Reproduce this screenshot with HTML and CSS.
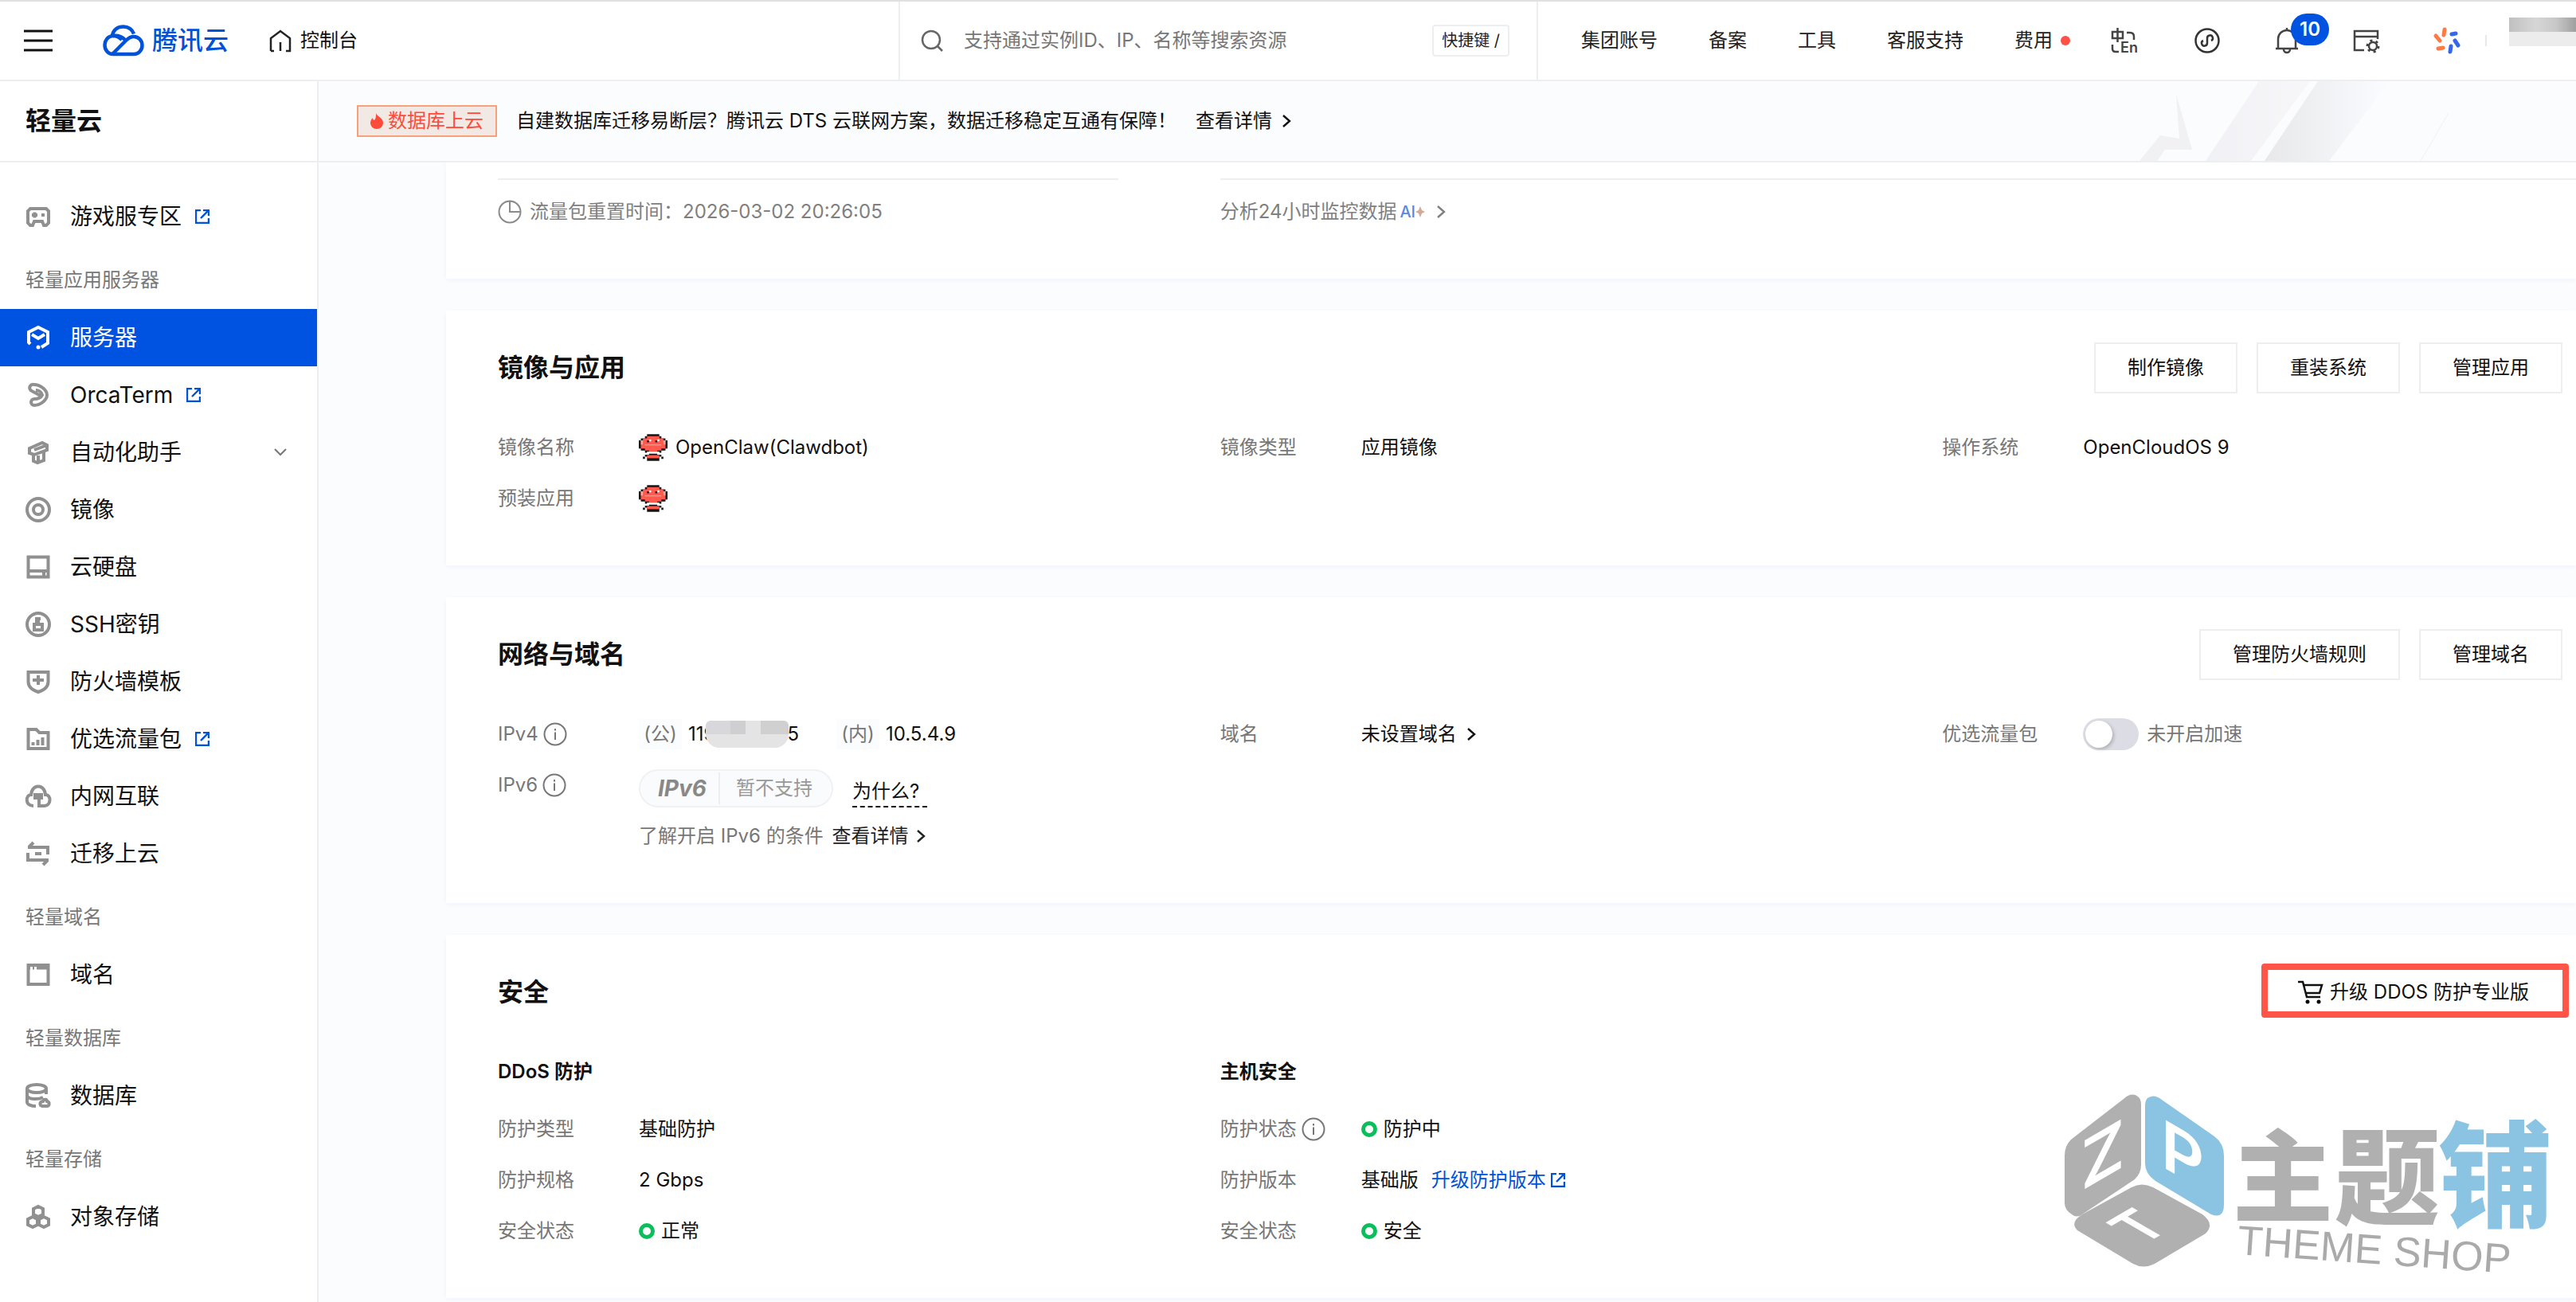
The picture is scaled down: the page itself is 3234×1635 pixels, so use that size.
FILE: index.html
```html
<!DOCTYPE html>
<html lang="zh-CN">
<head>
  <meta charset="UTF-8">
  <title>轻量云 - 控制台</title>
  <link rel="stylesheet" href="styles.css">
</head>
<body>

<!-- Shared icons -->
<svg class="sprite" aria-hidden="true">
  <symbol id="i-ext" viewBox="0 0 18 18"><path d="M7 1H1v16h16v-6M7 11l9-9M10 1h7v7" fill="none" stroke="currentColor" stroke-width="2.4"/></symbol>
  <symbol id="i-arrow" viewBox="0 0 12 18"><path d="M2 2l8 7-8 7" fill="none" stroke="currentColor" stroke-width="2.4"/></symbol>
  <symbol id="i-info" viewBox="0 0 30 30"><circle cx="15" cy="15" r="13.5" fill="none" stroke="currentColor" stroke-width="2"/><path d="M15 12.500v9.500M15 8v2.500" stroke="currentColor" stroke-width="2"/></symbol>
  <symbol id="i-claw" viewBox="0 0 14 13">
    <path d="M4 0h6v1h1v1h2v1h1v4h-1v1h-2v1H9v1h2v1h1v1h-1v-1h-1v2H4v-2H3v1H2v-1h1v-1h2V9H3V8H1V7H0V3h1V2h2V1h1z" fill="#151515"/>
    <path d="M4 1h6v1h2v1h1v4h-2v1H9v.5H5V8H3V7H1V3h1V2h2z" fill="#ff5a4d"/>
    <path d="M4 8.500h6v1H4z" fill="#fff"/>
    <path d="M4 10.200h6v1.500H4z" fill="#ff5a4d"/>
    <path d="M4 3h1v1H4zM8 3h1v1H8z" fill="#151515"/><path d="M5 2.500h1v1H5zM9 2.500h1v1H9z" fill="#fff"/>
    <path d="M1 3h1v2H1zM12 3h1v2h-1zM3 5h8v.4H3z" fill="#ffa59c"/>
  </symbol>
</svg>

<header class="topbar">
  <div class="topbar-left">
    <button class="icon-btn menu-btn" aria-label="菜单">
      <svg width="36" height="28" viewBox="0 0 36 28"><path d="M0 2h36M0 14h36M0 26h36" stroke="#111" stroke-width="3"/></svg>
    </button>
    <a href="#" class="logo">
      <svg width="52" height="40" viewBox="0 0 52 40" fill="none" stroke="#0052d9" stroke-width="4.500" stroke-linejoin="round"><path d="M12 14C13 6 19 2.500 26 2.500c6 0 11 3.500 13 9"/><path d="M28 19C21 12 15 14 12 14C6 15 2.500 20 2.500 25.500 2.500 32 7 37 13 37h26c6 0 10.500-5 10.500-11S45 15 39 15c-4 0-7 2-9.500 4.500L13 36"/><path d="M13 14c4 0 8 2 11 5"/></svg>
      <span>腾讯云</span>
    </a>
    <a href="#" class="home">
      <svg width="30" height="28" viewBox="0 0 30 28"><path d="M3 27V11L15 2l12 9v16h-5M3 27h4M15 16v11" fill="none" stroke="#222" stroke-width="2.500"/></svg>
      <span>控制台</span>
    </a>
  </div>
  <div class="search">
    <svg width="28" height="28" viewBox="0 0 28 28"><circle cx="13" cy="13" r="11" fill="none" stroke="#666" stroke-width="2.500"/><path d="M21 21l6 6" stroke="#666" stroke-width="2.500"/></svg>
    <input type="text" aria-label="搜索" placeholder="支持通过实例ID、IP、名称等搜索资源">
    <kbd>快捷键 /</kbd>
  </div>
  <nav class="topnav">
    <a href="#">集团账号</a>
    <a href="#">备案</a>
    <a href="#">工具</a>
    <a href="#">客服支持</a>
    <a href="#" class="fee">费用<i class="dot"></i></a>
  </nav>
  <div class="tools">
    <button class="icon-btn lang" aria-label="语言">
      <svg width="34" height="34" viewBox="0 0 34 34"><g fill="none" stroke="#444" stroke-width="2.500"><path d="M2 6h13v8H2zM8.500 1v18M20 7h4q5 0 5 5v4M2 22v5q0 4 4 4h4"/></g><text x="12" y="32" class="lang-en">En</text></svg>
    </button>
    <button class="icon-btn" aria-label="小程序">
      <svg width="34" height="34" viewBox="0 0 34 34" fill="none" stroke="#333" stroke-width="2.500"><circle cx="17" cy="17" r="14.500"/><path d="M12 17a3.500 3.500 0 1 0 5 3v-6a3.500 3.500 0 1 1 5 3"/></svg>
    </button>
    <button class="icon-btn" aria-label="消息">
      <svg width="34" height="34" viewBox="0 0 34 34" fill="none" stroke="#444" stroke-width="2.500"><path d="M3 27h28M6 27V15a11 11 0 0 1 22 0v12M17 1v4M13 28a4 4 0 0 0 8 0"/></svg>
      <span class="badge">10</span>
    </button>
    <button class="icon-btn" aria-label="设置">
      <svg width="34" height="34" viewBox="0 0 34 34" fill="none" stroke="#444" stroke-width="2.500"><path d="M14 29H2V5h29v10M2 12h29"/><circle cx="25" cy="24" r="5"/><circle cx="25" cy="24" r="7" stroke-dasharray="3 4.300" stroke-width="3"/></svg>
    </button>
    <button class="icon-btn" aria-label="助手">
      <svg width="36" height="36" viewBox="0 0 36 36" stroke-width="5" stroke-linecap="round"><g stroke="#ff7a45"><path d="M15 4l-1 7M4 12l5 6M7 28l6-1"/></g><g stroke="#3766e8"><path d="M22 32l1-7M32 24l-4-6M24 10l5-1"/></g></svg>
    </button>
    <span class="user"><i class="mosaic"></i></span>
  </div>
</header>

<div class="layout">
  <aside class="sidebar">
    <h1>轻量云</h1>
    <ul class="menu">
      <li><a href="#">
        <svg class="mi" viewBox="0 0 32 32"><path d="M6 6h20l3 3v15l-3 3h-3l-2-5H11l-2 5H6l-3-3V9z"/><path d="M8 14h7M11.500 10.500v7M20 14h4" /></svg>
        游戏服专区<svg class="ext"><use href="#i-ext"/></svg></a></li>
      <li class="group">轻量应用服务器</li>
      <li class="active"><a href="#">
        <svg class="mi" viewBox="0 0 32 32"><path d="M6 24l-2-2V9l12-6 12 6v14l-8 5M8 12l8 5 8-5"/><circle cx="16" cy="28" r="2.500" fill="currentColor" stroke="none"/></svg>
        服务器</a></li>
      <li><a href="#">
        <svg class="mi" viewBox="0 0 32 32"><path d="M19 17L8 11a4 4 0 0 1 3-8c8 0 16 7 16 13s-8 13-16 13a4 4 0 0 1 0-8c4 0 8-1 10-5-1-4-5-6-8-6"/></svg>
        OrcaTerm<svg class="ext"><use href="#i-ext"/></svg></a></li>
      <li><a href="#">
        <svg class="mi" viewBox="0 0 32 32"><path d="M5 11l16-7 6 3v6l-16 6-6-2zM11 13l16-6M10 19v8l5 2 8-3V14M16 20v8"/></svg>
        自动化助手<svg class="down" viewBox="0 0 16 10"><path d="M1 1l7 7 7-7" fill="none" stroke="#777" stroke-width="2"/></svg></a></li>
      <li><a href="#">
        <svg class="mi" viewBox="0 0 32 32"><circle cx="16" cy="16" r="14"/><circle cx="16" cy="16" r="6"/></svg>
        镜像</a></li>
      <li><a href="#">
        <svg class="mi" viewBox="0 0 32 32"><path d="M3.500 3.500h25v25h-25zM3.500 21h25M21 25h4"/></svg>
        云硬盘</a></li>
      <li><a href="#">
        <svg class="mi" viewBox="0 0 32 32"><circle cx="16" cy="16" r="14"/><path d="M11 16h10v7H11zM14 16v-7h5M14 12h4"/></svg>
        SSH密钥</a></li>
      <li><a href="#">
        <svg class="mi" viewBox="0 0 32 32"><path d="M3.500 4h25v12q0 9-12.500 13Q3.500 25 3.500 16zM9 14h14M16 8v12"/></svg>
        防火墙模板</a></li>
      <li><a href="#">
        <svg class="mi" viewBox="0 0 32 32"><path d="M3.500 4h10l4 4h11v20h-25zM9.500 20v4M15.500 17v7M21.500 14v10"/></svg>
        优选流量包<svg class="ext"><use href="#i-ext"/></svg></a></li>
      <li><a href="#">
        <svg class="mi" viewBox="0 0 32 32"><path d="M10 28c-11 0-10-14-3-14 1-14 17-14 18 0 8 0 7 14-1 14h-7V18M12 14h8v4h-8z"/></svg>
        内网互联</a></li>
      <li><a href="#">
        <svg class="mi" viewBox="0 0 32 32"><path d="M3 8h25v9M10 2L4 8M29 24H3v-9M22 30l6-6M12 16h8"/></svg>
        迁移上云</a></li>
      <li class="group">轻量域名</li>
      <li><a href="#">
        <svg class="mi" viewBox="0 0 32 32"><path d="M3.500 4h25v24h-25z"/><path d="M3 7.500h3M9 7.500h2M14 7.500h15" stroke-width="4"/></svg>
        域名</a></li>
      <li class="group">轻量数据库</li>
      <li><a href="#">
        <svg class="mi" viewBox="0 0 32 32"><ellipse cx="14" cy="7" rx="12" ry="5"/><path d="M2 7v17c0 3 5 5 11 5M26 7v7M2 16c2 5 14 5 20 2M19 28c-2-4 2-5 3-5 2-4 5-2 5 0 4 1 3 6 0 6h-6z"/></svg>
        数据库</a></li>
      <li class="group">轻量存储</li>
      <li><a href="#">
        <svg class="mi" viewBox="0 0 32 32"><path d="M16 3l6 3v7l-6 3-6-3V6zM9 16l6 3v7l-6 3-6-3v-7zM23 16l6 3v7l-6 3-6-3v-7z"/></svg>
        对象存储</a></li>
    </ul>
  </aside>

  <main>
    <div class="notice">
      <svg class="notice-art" width="420" height="100" viewBox="0 0 420 100">
        <defs>
          <linearGradient id="band" x1="0" x2="1"><stop offset="0" stop-color="#e8e8ea"/><stop offset="1" stop-color="#fafcff"/></linearGradient>
          <linearGradient id="band2" x1="0" x2="1"><stop offset="0" stop-color="#f1f1f5"/><stop offset="1" stop-color="#f7f7fa"/></linearGradient>
        </defs>
        <path d="M142 0h64L132 100H75z" fill="url(#band2)"/>
        <path d="M216 0h90L230 100H149z" fill="url(#band)"/>
        <path d="M38 16l20 70H24l-10 14H-8l26-32 24 4z" fill="#f1f1f3"/>
        <path d="M380 40l-35 60" stroke="#f0f1f4"/>
      </svg>
      <span class="tag"><svg width="16" height="20" viewBox="0 0 16 20"><path d="M7 0c1 4 9 6 9 12 0 5-4 8-8 8s-8-3-8-8c0-3 2-5 3-6 0 2 1 3 2 3 2-2 2-5 2-9z" fill="currentColor"/></svg>数据库上云</span>
      <span>自建数据库迁移易断层？腾讯云 DTS 云联网方案，数据迁移稳定互通有保障！</span>
      <a href="#" class="more">查看详情<svg class="arrow"><use href="#i-arrow"/></svg></a>
    </div>

    <div class="content">
      <section class="card usage">
        <div class="grid">
          <div class="usage-cell">
            <svg width="30" height="30" viewBox="0 0 30 30"><path d="M15 1.500A13.500 13.500 0 1 0 28.500 15 13.500 13.500 0 0 0 15 1.500V15h13" fill="none" stroke="#8a8a8a" stroke-width="2"/></svg>
            <span>流量包重置时间：2026-03-02 20:26:05</span>
          </div>
          <a href="#" class="usage-cell wide">
            <span>分析24小时监控数据</span>
            <b class="ai">AI<svg width="12" height="16" viewBox="0 0 12 16"><path d="M6 1l2 5 4 2-4 2-2 5-2-5-4-2 4-2z" fill="#d2a99a"/></svg></b>
            <svg class="arrow"><use href="#i-arrow"/></svg>
          </a>
        </div>
      </section>

      <section class="card">
        <div class="card-head">
          <h2>镜像与应用</h2>
          <div class="actions">
            <button class="btn">制作镜像</button>
            <button class="btn">重装系统</button>
            <button class="btn">管理应用</button>
          </div>
        </div>
        <div class="grid">
          <dl>
            <div class="row"><dt>镜像名称</dt><dd><svg class="claw"><use href="#i-claw"/></svg>OpenClaw(Clawdbot)</dd></div>
            <div class="row"><dt>预装应用</dt><dd><svg class="claw"><use href="#i-claw"/></svg></dd></div>
          </dl>
          <dl>
            <div class="row"><dt>镜像类型</dt><dd>应用镜像</dd></div>
          </dl>
          <dl>
            <div class="row"><dt>操作系统</dt><dd>OpenCloudOS 9</dd></div>
          </dl>
        </div>
      </section>

      <section class="card">
        <div class="card-head">
          <h2>网络与域名</h2>
          <div class="actions">
            <button class="btn">管理防火墙规则</button>
            <button class="btn">管理域名</button>
          </div>
        </div>
        <div class="grid">
          <dl>
            <div class="row"><dt>IPv4<svg class="info"><use href="#i-info"/></svg></dt>
              <dd><span class="scope">(公)</span>119<i class="mosaic"></i>5<span class="scope inner">(内)</span>10.5.4.9</dd></div>
            <div class="row ipv6"><dt>IPv6<svg class="info"><use href="#i-info"/></svg></dt>
              <dd>
                <div class="pill-line">
                  <span class="pill"><b>IPv6</b><span>暂不支持</span></span>
                  <a href="#" class="why">为什么?</a>
                </div>
                <div class="tip">了解开启 IPv6 的条件 <a href="#" class="more">查看详情<svg class="arrow"><use href="#i-arrow"/></svg></a></div>
              </dd></div>
          </dl>
          <dl>
            <div class="row"><dt>域名</dt><dd><a href="#" class="more">未设置域名<svg class="arrow"><use href="#i-arrow"/></svg></a></dd></div>
          </dl>
          <dl>
            <div class="row"><dt>优选流量包</dt><dd><input type="checkbox" id="boost" class="switch"><label for="boost">未开启加速</label></dd></div>
          </dl>
        </div>
      </section>

      <section class="card">
        <div class="card-head">
          <h2>安全</h2>
          <div class="actions">
            <button class="btn marked"><svg width="32" height="30" viewBox="0 0 32 30"><path d="M0 2h6l5 19h17M7 6h23l-3 10H10" fill="none" stroke="#111" stroke-width="2.500"/><circle cx="12" cy="27" r="2.500"/><circle cx="26" cy="27" r="2.500"/></svg>升级 DDOS 防护专业版</button>
          </div>
        </div>
        <div class="grid">
          <div>
            <h3>DDoS 防护</h3>
            <dl>
              <div class="row"><dt>防护类型</dt><dd>基础防护</dd></div>
              <div class="row"><dt>防护规格</dt><dd>2 Gbps</dd></div>
              <div class="row"><dt>安全状态</dt><dd><i class="ok"></i>正常</dd></div>
            </dl>
          </div>
          <div>
            <h3>主机安全</h3>
            <dl>
              <div class="row"><dt>防护状态<svg class="info"><use href="#i-info"/></svg></dt><dd><i class="ok"></i>防护中</dd></div>
              <div class="row"><dt>防护版本</dt><dd>基础版<a href="#" class="upgrade">升级防护版本<svg class="ext"><use href="#i-ext"/></svg></a></dd></div>
              <div class="row"><dt>安全状态</dt><dd><i class="ok"></i>安全</dd></div>
            </dl>
          </div>
        </div>
      </section>
    </div>
  </main>
</div>

<!-- Site watermark -->
<svg class="watermark" width="640" height="300" viewBox="0 -40 640 300">
  <g fill="#b0b0b0">
    <path d="M76 5q10-9 18-3 4 3 4 10v76q0 10-8 18L24 150q-7 5-13 0-9-6-9-14V76q0-12 8-20z"/>
    <path d="M24 150l62-34q13-7 27 0l62 34q16 12 4 24l-64 38q-14 7-27 0l-70-42q-10-10 6-20z"/>
  </g>
  <path d="M106 4q8-6 18 2l66 46q12 9 12 24v62q0 18-16 12l-70-42q-13-9-13-22V14q0-7 3-10z" fill="#8bc4e3"/>
  <g class="cube-text">
    <text transform="translate(50 82) skewY(-30)">Z</text>
    <text transform="translate(150 82) skewY(30)">P</text>
    <text transform="translate(100 168) rotate(-30) skewX(30)" font-size="66">T</text>
  </g>
  <g class="brand-text">
    <text x="213" y="150" font-size="126">主</text>
    <text x="341" y="152" font-size="132">题</text>
    <text x="471" y="155" font-size="144" fill="#8bc4e3">铺</text>
  </g>
  <text class="brand-sub" transform="translate(218 200) rotate(4)">THEME SHOP</text>
</svg>

</body>
</html>
```
FILE: styles.css
```css
* { box-sizing: border-box; margin: 0; padding: 0; }
body {
  position: relative; min-height: 100vh; overflow-x: hidden;
  font-family: Inter, "Noto Sans CJK SC", sans-serif;
  font-size: 24px; line-height: 32px; color: #111; background: #fff;
}
a { color: inherit; text-decoration: none; }
ul { list-style: none; }
i { font-style: normal; }
svg { flex: none; overflow: visible; }
button, input { font: inherit; color: inherit; }
.sprite { position: absolute; width: 0; height: 0; }

/* Top bar */
.topbar {
  display: flex; align-items: stretch; height: 102px;
  border-top: 2px solid #e0e0e0; border-bottom: 2px solid #eceef2; background: #fff;
}
.topbar-left { flex: 1; display: flex; align-items: center; padding-left: 30px; }
.icon-btn { position: relative; display: flex; background: none; border: none; cursor: pointer; }
.logo { display: flex; align-items: center; gap: 10px; margin-left: 63px; color: #0052d9; font-size: 32px; font-weight: 500; }
.home { display: flex; align-items: center; gap: 10px; margin-left: 50px; }
.search {
  flex: none; display: flex; align-items: center; width: 803px; padding: 0 34px 0 26px;
  border-left: 2px solid #eceef2; border-right: 2px solid #eceef2;
}
.search input { flex: 1; margin-left: 26px; border: none; outline: none; background: none; }
.search input::placeholder { color: #777; opacity: 1; }
kbd {
  padding: 0 10px; font-family: inherit; font-size: 20px; line-height: 36px; color: #222;
  border: 2px solid #eceef2; border-radius: 4px;
}
.topnav { display: flex; align-items: center; gap: 64px; padding-left: 54px; color: #222; }
.fee { display: flex; align-items: center; gap: 10px; }
.dot { width: 12px; height: 12px; border-radius: 50%; background: #ff5145; }
.tools { display: flex; align-items: center; gap: 66px; padding-left: 51px; }
.lang { margin-right: 4px; }
.lang-en { font-size: 18px; font-weight: 600; fill: #444; }
.badge {
  position: absolute; left: 22px; top: -17px; width: 48px; border-radius: 20px;
  font-size: 24px; font-weight: 600; line-height: 40px; text-align: center; color: #fff; background: #0052e0;
}
.user { margin-left: -36px; padding-left: 28px; border-left: 2px solid #e6e8ec; line-height: 32px; }
.user .mosaic {
  display: block; width: 84px; height: 36px; margin-top: -22px;
  background: linear-gradient(90deg, #c0c0c0, #d6d6d6 40%, #c8c8c8 70%, #a0a0a0) 0 0 / 100% 50% no-repeat #ececec;
}

/* Sidebar */
.layout { display: flex; min-height: calc(100vh - 102px); }
.sidebar { flex: none; width: 400px; border-right: 2px solid #eceef2; }
.sidebar h1 { padding-left: 32px; font-size: 32px; line-height: 100px; border-bottom: 2px solid #eceef2; }
.menu { padding-top: 32px; }
.menu a { display: flex; align-items: center; height: 72px; padding: 0 38px 0 32px; font-size: 28px; }
.menu .active { color: #fff; background: #0052e0; }
.mi { width: 32px; height: 32px; margin-right: 24px; fill: none; stroke: #909090; stroke-width: 4; }
.active .mi { color: #fff; stroke: #fff; }
.group { padding: 28px 32px 20px; color: #777; }
.ext { width: 18px; height: 18px; color: #0052d9; }
.menu .ext { margin-left: 17px; }
.down { width: 16px; height: 10px; margin-left: auto; }

/* Content */
main { flex: 1; min-width: 0; background: #fafcfe; }
.notice {
  position: relative; display: flex; align-items: center; height: 102px; padding-left: 48px;
  border-bottom: 2px solid #eceef2;
}
.notice-art { position: absolute; right: 120px; top: 0; }
.tag {
  display: flex; align-items: center; gap: 6px; height: 40px; margin-right: 24px; padding: 0 15px;
  color: #ff4b3a; background: #f2e9e5; border: 2px solid #f7a07a;
}
.more { display: inline-flex; align-items: center; gap: 12px; }
.notice .more { margin-left: 24px; }
.arrow { width: 12px; height: 18px; }
.content { padding-left: 160px; }
.card {
  margin-bottom: 40px; padding: 40px 17px 52px 65px; background: #fff;
  box-shadow: 0 2px 6px rgba(30, 60, 120, 0.04);
}
.card:last-child { margin-bottom: 0; }
.usage { padding-top: 20px; }
.grid { display: grid; grid-template-columns: repeat(3, 1fr); column-gap: 128px; }
.usage-cell { display: flex; align-items: center; gap: 10px; padding-top: 8px; border-top: 2px solid #eceef0; color: #808080; line-height: 64px; }
.wide { grid-column: span 2; margin-right: -17px; }
.ai { display: flex; align-items: center; font-size: 20px; font-weight: 500; color: #5b87e0; margin-right: 4px; margin-left: -6px; }
.card-head { display: flex; justify-content: space-between; height: 64px; margin-bottom: 36px; line-height: 64px; }
h2 { font-size: 32px; }
h3 { margin-bottom: 8px; font-size: 24px; font-weight: 600; line-height: 64px; }
.actions { display: flex; gap: 24px; }
.btn {
  display: flex; align-items: center; gap: 10px; padding: 0 40px; cursor: pointer;
  background: #fff; border: 2px solid #eceef0;
}
.marked { position: relative; gap: 8px; border-color: transparent; }
.marked::after {
  content: ""; position: absolute; inset: -6px -10px -2px -6px;
  border: 8px solid #ff5549; border-radius: 4px;
}

.row { display: flex; min-height: 64px; line-height: 64px; }
dt { flex: none; display: flex; align-items: center; gap: 6px; width: 177px; height: 64px; color: #777; }
dd { display: flex; align-items: center; }
.info { width: 30px; height: 30px; }
.claw { width: 36px; height: 34px; margin-right: 10px; }
.scope { width: 54px; margin-right: 8px; line-height: 38px; text-align: center; color: #777; background: #fafcfe; }
.inner { margin-left: 47px; }
dd .mosaic {
  width: 104px; height: 34px; margin: 0 -2px 0 -12px; border-radius: 6px 6px 17px 17px; z-index: 1;
  background: linear-gradient(90deg, #d8d8dc 30%, #cfcfd2 30% 48%, #e4e4e4 48% 66%, #d0d0d0 66%) 0 0 / 100% 50% no-repeat #e4e4e4;
}
.ipv6 dd { display: block; }
.pill-line { display: flex; padding-top: 12px; margin-bottom: 4px; }
.pill {
  display: flex; align-items: center; height: 48px; width: 244px; margin-right: 24px; padding-left: 22px;
  line-height: 40px; color: #999; background: #fafbfc; border: 2px solid #eff1f3; border-radius: 24px;
}
.pill b { width: 78px; margin-right: 20px; font-size: 28px; font-style: italic; color: #888; border-right: 2px solid #eceef0; }
.why { height: 48px; padding-right: 10px; line-height: 56px; border-bottom: 2px dashed #111; }
.tip { color: #777; }
.tip .more { margin-left: 4px; color: #222; gap: 10px; }
.switch {
  appearance: none; width: 70px; height: 40px; margin-right: 10px; padding: 3px;
  border-radius: 20px; background: #dcdce4; cursor: pointer;
}
.switch::before { content: ""; display: block; width: 34px; height: 34px; border-radius: 50%; background: #fff; box-shadow: 2px 2px 4px rgba(0, 0, 0, 0.2); }
.switch:checked { background: #0052d9; }
.switch:checked::before { margin-left: 30px; }
.switch + label { color: #777; }
.ok { width: 20px; height: 20px; margin-right: 8px; border: 5px solid #0abf5b; border-radius: 50%; }
.upgrade { display: flex; align-items: center; gap: 6px; margin-left: 16px; color: #0052d9; }

.watermark { position: absolute; right: 4px; bottom: 0; pointer-events: none; }
.cube-text { font-size: 84px; font-weight: 600; fill: #fff; text-anchor: middle; dominant-baseline: middle; }
.brand-text { font-family: "Noto Sans CJK SC", sans-serif; font-weight: 900; fill: #b0b0b0; }
.brand-sub { font-family: "Liberation Sans", sans-serif; font-size: 52px; font-weight: 400; fill: #aaa; }
```
